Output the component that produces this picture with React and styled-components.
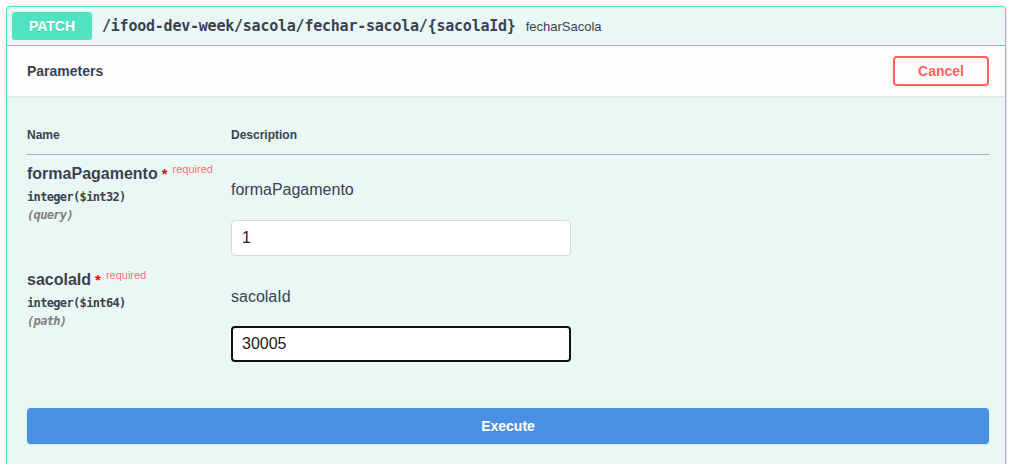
import React from "react";
import styled, { createGlobalStyle } from "styled-components";

const Global = createGlobalStyle`
  html, body { margin: 0; padding: 0; background: #fff; }
  body { font-family: "Liberation Sans", Arial, sans-serif; color: #3b4151; }
  * { box-sizing: border-box; }
`;

const Page = styled.div`
  padding: 6px 0 0 6px;
  height: 464px;
  overflow: hidden;
`;

const Block = styled.div`
  width: 1000px;
  border: 1px solid #50e3c2;
  border-radius: 4px;
  background: #eaf8f5;
  box-shadow: 0 0 3px rgba(0, 0, 0, 0.19);
  min-height: 480px;
`;

const Summary = styled.div`
  display: flex;
  align-items: center;
  padding: 5px;
  border-bottom: 1px solid #50e3c2;
`;

const Method = styled.span`
  min-width: 80px;
  padding: 6px 15px;
  border-radius: 3px;
  background: #50e3c2;
  color: #fff;
  font-size: 14px;
  font-weight: 700;
  text-align: center;
  text-shadow: 0 1px 0 rgba(0, 0, 0, 0.1);
  line-height: 16px;
`;

const Path = styled.span`
  padding: 0 10px;
  font-family: "DejaVu Sans Mono", monospace;
  font-size: 15px;
  letter-spacing: -0.23px;
  font-weight: 700;
  color: #3b4151;
`;

const OpId = styled.span`
  font-size: 13px;
  color: #3b4151;
`;

const SectionHeader = styled.div`
  display: flex;
  align-items: center;
  justify-content: space-between;
  min-height: 50px;
  padding: 8px 16px 8px 20px;
  background: rgba(255, 255, 255, 0.85);
  box-shadow: 0 1px 2px rgba(0, 0, 0, 0.1);
`;

const SectionTitle = styled.h4`
  margin: 0;
  font-size: 14px;
  font-weight: 700;
  color: #3b4151;
`;

const CancelButton = styled.button`
  width: 96px;
  height: 30px;
  padding: 0;
  border: 2px solid #ff6060;
  border-radius: 4px;
  background: transparent;
  color: #ff6060;
  font-family: "Liberation Sans", Arial, sans-serif;
  font-size: 14px;
  font-weight: 700;
  box-shadow: 0 1px 2px rgba(0, 0, 0, 0.1);
`;

const TableWrap = styled.div`
  padding: 20px 16px 0 20px;
`;

const Row = styled.div`
  display: grid;
  grid-template-columns: 204px 1fr;
  padding: ${(p) => p.$pad};
  border-bottom: ${(p) => (p.$head ? "1px solid #a9b0b3" : "none")};
`;

const HeadCell = styled.div`
  font-size: 12px;
  font-weight: 700;
  line-height: 14px;
  color: #3b4151;
`;

const NameCell = styled.div`
  display: flex;
  flex-direction: column;
`;

const ParamName = styled.div`
  font-size: 16px;
  font-weight: 700;
  line-height: 18px;
  color: #3b4151;
`;

const Star = styled.span`
  color: red;
  font-size: 15px;
  margin-left: 4px;
`;

const Required = styled.span`
  position: relative;
  top: -6px;
  padding-left: 5px;
  font-size: 11px;
  font-weight: 400;
  color: rgba(255, 0, 0, 0.6);
`;

const ParamType = styled.div`
  margin-top: 4px;
  font-family: "DejaVu Sans Mono", monospace;
  font-size: 12px;
  letter-spacing: -0.65px;
  font-weight: 600;
  line-height: 18px;
  color: #3b4151;
`;

const ParamIn = styled.div`
  font-family: "DejaVu Sans Mono", monospace;
  font-size: 12px;
  letter-spacing: -0.65px;
  font-style: italic;
  font-weight: 600;
  line-height: 18px;
  color: #808080;
`;

const DescCell = styled.div`
  display: flex;
  flex-direction: column;
  padding-top: ${(p) => p.$top};
`;

const DescText = styled.p`
  margin: 0;
  font-size: 16px;
  line-height: 18px;
  color: #3b4151;
`;

const Input = styled.input`
  width: 340px;
  height: 36px;
  margin-top: ${(p) => p.$gap};
  border: ${(p) => (p.$focused ? "2px solid #111" : "1px solid #d9d9d9")};
  border-radius: 4px;
  background: #fff;
  font-family: "Liberation Sans", Arial, sans-serif;
  font-size: 16px;
  color: #222;
  outline: none;
  padding: 0 0 0 ${(p) => (p.$focused ? "9px" : "10px")};
`;

const ExecuteWrap = styled.div`
  padding: 46px 16px 20px 20px;
`;

const ExecuteButton = styled.button`
  width: 100%;
  height: 36px;
  border: 2px solid #4990e2;
  border-radius: 4px;
  background: #4990e2;
  color: #fff;
  font-family: "Liberation Sans", Arial, sans-serif;
  font-size: 14px;
  font-weight: 700;
  box-shadow: 0 1px 2px rgba(0, 0, 0, 0.1);
`;

const params = [
  { name: "formaPagamento", type: "integer($int32)", where: "(query)", value: "1", focused: false, pad: "10px 0 5px 0", top: "16px", gap: "21px" },
  { name: "sacolaId", type: "integer($int64)", where: "(path)", value: "30005", focused: true, pad: "10px 0 0 0", top: "17px", gap: "20px" },
];

export default function App() {
  return (
    <>
      <Global />
      <Page>
        <Block>
          <Summary>
            <Method>PATCH</Method>
            <Path>/ifood-dev-week/sacola/fechar-sacola/&#8203;{"{sacolaId}"}</Path>
            <OpId>fecharSacola</OpId>
          </Summary>
          <SectionHeader>
            <SectionTitle>Parameters</SectionTitle>
            <CancelButton>Cancel</CancelButton>
          </SectionHeader>
          <TableWrap>
            <Row $head $pad="12px 0 12px 0">
              <HeadCell>Name</HeadCell>
              <HeadCell>Description</HeadCell>
            </Row>
            {params.map((p) => (
              <Row key={p.name} $pad={p.pad}>
                <NameCell>
                  <ParamName>
                    {p.name}
                    <Star>*</Star>
                    <Required>required</Required>
                  </ParamName>
                  <ParamType>{p.type}</ParamType>
                  <ParamIn>{p.where}</ParamIn>
                </NameCell>
                <DescCell $top={p.top}>
                  <DescText>{p.name}</DescText>
                  <Input $focused={p.focused} $gap={p.gap} defaultValue={p.value} />
                </DescCell>
              </Row>
            ))}
          </TableWrap>
          <ExecuteWrap>
            <ExecuteButton>Execute</ExecuteButton>
          </ExecuteWrap>
        </Block>
      </Page>
    </>
  );
}
